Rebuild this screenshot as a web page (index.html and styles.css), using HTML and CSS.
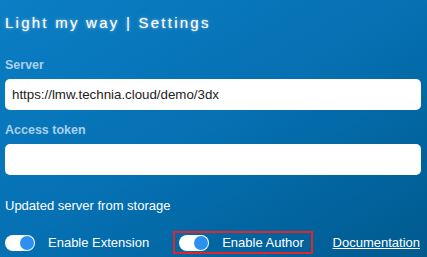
FILE: index.html
```html
<!DOCTYPE html>
<html>
<head>
<meta charset="utf-8">
<link rel="stylesheet" href="styles.css">
</head>
<body>
<div class="app">
  <h1 class="title">Light my way | Settings</h1>
  <label class="label">Server</label>
  <div class="field">https://lmw.technia.cloud/demo/3dx</div>
  <label class="label">Access token</label>
  <div class="field"></div>
  <p class="status">Updated server from storage</p>
  <div class="row">
    <div class="opt">
      <span class="toggle"><span class="knob"></span></span>
      <span class="opt-text">Enable Extension</span>
    </div>
    <div class="opt highlight">
      <span class="toggle"><span class="knob"></span></span>
      <span class="opt-text">Enable Author</span>
    </div>
    <a class="doc" href="#">Documentation</a>
  </div>
</div>
</body>
</html>
```

FILE: styles.css
```css
html, body {
  margin: 0;
  padding: 0;
}
body {
  width: 427px;
  height: 257px;
  overflow: hidden;
  background: linear-gradient(to bottom right, #0b7ec5 0%, #0570b2 50%, #005a8e 100%);
  font-family: "Liberation Sans", Arial, sans-serif;
  color: #ffffff;
}
.app {
  display: flex;
  flex-direction: column;
  padding: 0 6px 0 5px;
}
.title {
  margin: 14px 0 0 0;
  font-size: 15px;
  line-height: 18px;
  font-weight: normal;
  letter-spacing: 2.25px;
  color: #ffffff;
  text-shadow: 0 0 2px rgba(255,255,255,0.55), 0 0 5px rgba(255,255,255,0.3);
}
.label {
  margin-top: 26px;
  font-size: 12.5px;
  line-height: 14px;
  font-weight: bold;
  color: #a9d0ec;
}
.label + .field {
  margin-top: 7px;
}
.field + .label {
  margin-top: 13px;
}
.field {
  height: 31px;
  box-sizing: border-box;
  background: #ffffff;
  border-radius: 5px;
  padding: 0 7px;
  display: flex;
  align-items: center;
  font-size: 13.3px;
  color: #222222;
}
.status {
  margin: 23px 0 0 0;
  font-size: 13px;
  line-height: 16px;
}
.row {
  margin-top: 17px;
  display: flex;
  align-items: center;
}
.opt {
  display: flex;
  align-items: center;
  gap: 13px;
  font-size: 13px;
  height: 23px;
}
.highlight {
  margin-left: 24px;
  box-sizing: border-box;
  border: 2px solid #e0262c;
  padding: 0 7px 0 4px;
}
.toggle {
  width: 30px;
  height: 16px;
  border-radius: 8px;
  background: #ffffff;
  display: flex;
  align-items: center;
  justify-content: flex-end;
  padding-right: 1px;
  box-sizing: border-box;
}
.knob {
  width: 14px;
  height: 14px;
  border-radius: 50%;
  background: #2d8ff0;
}
.doc {
  margin-left: auto;
  margin-right: 1px;
  font-size: 13px;
  color: #ffffff;
  text-decoration: underline;
}
```
